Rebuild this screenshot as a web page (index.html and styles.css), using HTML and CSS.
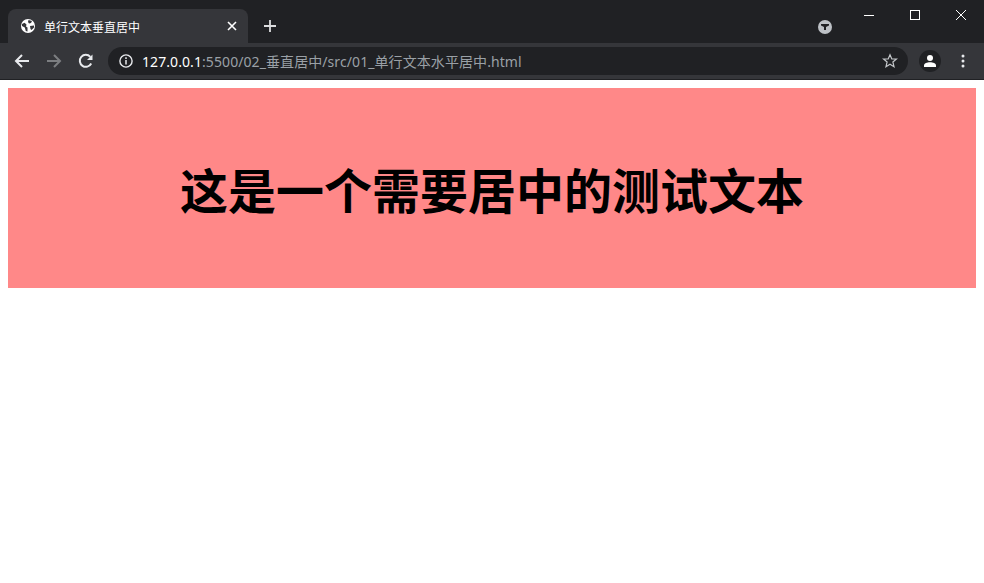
FILE: index.html
```html
<!DOCTYPE html>
<html lang="zh-CN">
<head>
  <meta charset="UTF-8">
  <title>单行文本垂直居中</title>
  <link rel="stylesheet" href="styles.css">
</head>
<body>
  <header class="browser">
    <div class="tabstrip">
      <div class="tab">
        <svg class="favicon" width="14" height="14" viewBox="0 0 14 14">
          <circle cx="7" cy="7" r="7" fill="#fff"/>
          <path d="M1 5 3.500 3.800 5.500 5.500 5 7.500 6.500 8.500 6.500 12.500 4.800 12 3.800 8.500 1 7ZM7.500 1 11 2 10 4 8 4.500 7 3ZM9 7 13 6.500 13 8.500 10.500 11 9.500 10Z" fill="#35363a"/>
        </svg>
        <span class="tab-title">单行文本垂直居中</span>
        <svg class="tab-close" width="10" height="10" viewBox="0 0 10 10">
          <path d="M1 1 9 9M9 1 1 9" stroke="#fff" stroke-width="1.6"/>
        </svg>
      </div>
      <svg class="new-tab" width="14" height="14" viewBox="0 0 14 14">
        <path d="M7 1V13M1 7H13" stroke="#dcdddf" stroke-width="1.8"/>
      </svg>
      <div class="media-btn">
        <svg width="8" height="6" viewBox="0 0 8 6"><path d="M0 0H8V1.500L5 3V6H3V3L0 1.500Z" fill="#202124"/></svg>
      </div>
      <div class="window-btns">
        <svg width="46" height="30" viewBox="0 0 46 30"><path d="M18 15.500H28" stroke="#fff"/></svg>
        <svg width="46" height="30" viewBox="0 0 46 30"><rect x="18.500" y="10.500" width="9" height="9" fill="none" stroke="#fff"/></svg>
        <svg width="46" height="30" viewBox="0 0 46 30"><path d="M18 10 28 20M28 10 18 20" stroke="#fff"/></svg>
      </div>
    </div>
    <div class="toolbar">
      <svg class="nav-icon" width="16" height="16" viewBox="0 0 16 16">
        <path d="M15 8H2M8 2 2 8l6 6" fill="none" stroke="#e8eaed" stroke-width="2"/>
      </svg>
      <svg class="nav-icon" width="16" height="16" viewBox="0 0 16 16">
        <path d="M1 8H14M8 2l6 6-6 6" fill="none" stroke="#7c7e81" stroke-width="2"/>
      </svg>
      <svg class="nav-icon" width="16" height="16" viewBox="0 0 16 16">
        <path d="M13.200 10.500A6 6 0 1 1 12.300 3.800" fill="none" stroke="#e8eaed" stroke-width="2"/>
        <path d="M14.500 1.500V7H9Z" fill="#e8eaed"/>
      </svg>
      <div class="omnibox">
        <svg class="info" width="14" height="14" viewBox="0 0 14 14">
          <circle cx="7" cy="7" r="6.100" fill="none" stroke="#e8eaed" stroke-width="1.400"/>
          <path d="M7 6V10.500" stroke="#e8eaed" stroke-width="1.500"/>
          <path d="M7 3.300V5" stroke="#e8eaed" stroke-width="1.500"/>
        </svg>
        <span class="url"><span class="host">127.0.0.1</span>:5500/02_垂直居中/src/01_单行文本水平居中.html</span>
        <svg class="star" width="16" height="16" viewBox="0 0 16 16">
          <path d="M8 1.800 9.800 6H14.400L10.900 9 12 13.700 8 11.200 4 13.700 5.100 9 1.600 6H6.200Z" fill="none" stroke="#c4c7ca" stroke-width="1.200"/>
        </svg>
      </div>
      <div class="avatar">
        <svg width="14" height="14" viewBox="0 0 14 14">
          <circle cx="7" cy="4" r="3" fill="#fff"/>
          <path d="M1 13V11.500C1 9.500 4 8.300 7 8.300S13 9.500 13 11.500V13Z" fill="#fff"/>
        </svg>
      </div>
      <svg class="menu" width="4" height="14" viewBox="0 0 4 14">
        <circle cx="2" cy="2" r="1.500" fill="#e8eaed"/>
        <circle cx="2" cy="7" r="1.500" fill="#e8eaed"/>
        <circle cx="2" cy="12" r="1.500" fill="#e8eaed"/>
      </svg>
    </div>
  </header>

  <main class="page">
    <div class="box">这是一个需要居中的测试文本</div>
  </main>
</body>
</html>
```

FILE: styles.css
```css
* {
  box-sizing: border-box;
}
html, body {
  margin: 0;
  padding: 0;
  background: #fff;
}
body {
  font-family: "Liberation Sans", "Noto Sans CJK SC", sans-serif;
}

/* browser frame */
.browser {
  height: 80px;
  background: #202124;
}
.tabstrip {
  display: flex;
  align-items: flex-end;
  height: 43px;
  padding-left: 8px;
  position: relative;
}
.tab {
  display: flex;
  align-items: center;
  width: 240px;
  height: 34px;
  padding: 0 11px 0 13px;
  background: #35363a;
  border-radius: 8px 8px 0 0;
}
.favicon {
  flex: none;
}
.tab-title {
  flex: 1;
  margin-left: 9px;
  color: #fff;
  font-size: 12px;
}
.new-tab {
  margin: 0 0 10px 15px;
}
.media-btn {
  display: flex;
  align-items: center;
  justify-content: center;
  width: 14px;
  height: 14px;
  margin: 0 152px 9px auto;
  border-radius: 50%;
  background: #bdc1c6;
}
.window-btns {
  position: absolute;
  top: 0;
  right: 0;
  display: flex;
}
.toolbar {
  display: flex;
  align-items: center;
  height: 36px;
  padding-left: 14px;
  background: #35363a;
}
.nav-icon {
  margin-right: 16px;
}
.omnibox {
  display: flex;
  align-items: center;
  width: 800px;
  height: 28px;
  margin-left: -2px;
  padding: 0 10px 0 11px;
  background: #202124;
  border-radius: 14px;
}
.info {
  flex: none;
}
.url {
  flex: 1;
  margin-left: 9px;
  color: #9aa0a6;
  font-family: "Noto Sans", "Noto Sans CJK SC", sans-serif;
  font-size: 14px;
  letter-spacing: 0.08px;
  white-space: nowrap;
}
.host {
  color: #fff;
}
.avatar {
  display: flex;
  align-items: center;
  justify-content: center;
  width: 22px;
  height: 22px;
  margin-left: 11px;
  border-radius: 50%;
  background: #202124;
}
.menu {
  margin-left: 20px;
}

/* page content */
.page {
  padding: 8px;
}
.box {
  display: flex;
  align-items: center;
  justify-content: center;
  height: 200px;
  background: #ff8888;
  color: #000;
  font-size: 48px;
  font-weight: bold;
}
```
